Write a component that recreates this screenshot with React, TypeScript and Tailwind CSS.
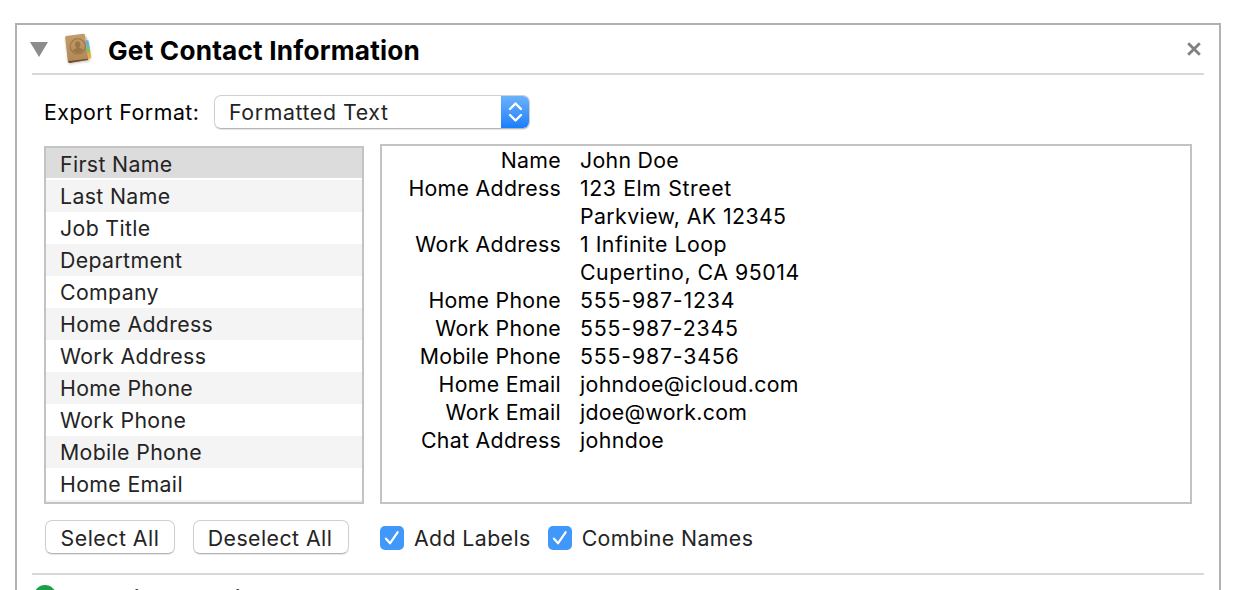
const fields = ["First Name", "Last Name", "Job Title", "Department", "Company", "Home Address", "Work Address", "Home Phone", "Work Phone", "Mobile Phone", "Home Email"];

const preview: [string, string, string][] = [
  ["Name", "John Doe", "tracking-[0.3px]"],
  ["Home Address", "123 Elm Street", "tracking-[0.6px]"],
  ["", "Parkview, AK 12345", "tracking-[0.4px]"],
  ["Work Address", "1 Infinite Loop", "tracking-[0.5px]"],
  ["", "Cupertino, CA 95014", "tracking-[0.55px]"],
  ["Home Phone", "555-987-1234", "tracking-[0.82px]"],
  ["Work Phone", "555-987-2345", "tracking-[0.82px]"],
  ["Mobile Phone", "555-987-3456", "tracking-[0.82px]"],
  ["Home Email", "johndoe@icloud.com", "tracking-[0.35px]"],
  ["Work Email", "jdoe@work.com", "tracking-[0.28px]"],
  ["Chat Address", "johndoe", "tracking-[0.4px]"],
];

function ContactsIcon() {
  return (
    <svg width="32" height="34" viewBox="0 0 32 34" className="shrink-0 overflow-visible drop-shadow-[0_1px_1px_rgba(0,0,0,0.2)]">
      <defs>
        <linearGradient id="cover" x1="0" y1="0" x2="0" y2="1">
          <stop offset="0" stopColor="#c39c68" />
          <stop offset="1" stopColor="#b08858" />
        </linearGradient>
      </defs>
      <path d="M5 31 26.5 28.2 27 26.5 24 5 21 4Z" fill="#d8d4cc" />
      <path d="M22.5 8l3 .5 1 6.5-3 .5z" fill="#5cb6dc" />
      <path d="M23.5 15l3.2-.3.7 6-3 .6z" fill="#78c66c" />
      <path d="M24.2 21l3.4-.4.6 5-3.3 1.6z" fill="#f2a83b" />
      <path d="M2.2 5.5Q2 4.2 3.2 4L20.3 1.8q1.4-.1 1.6 1.2l3.3 23.8q.1 1.2-1 1.6L6.3 30.5Q5 30.5 4.8 29Z" fill="url(#cover)" />
      <path d="M4.9 29.2 25 26.7v1.1L7 31q-1.6 0-2.1-1.8Z" fill="#6f4d2c" />
      <circle cx="14.8" cy="14.4" r="7.6" fill="none" stroke="#9a7546" strokeWidth="1.1" />
      <ellipse cx="14.7" cy="12.6" rx="2.6" ry="3.3" fill="#9a7546" />
      <path d="M9.5 18.8q1-1.6 4-2.5v-2h2.7v1.6q3 .5 4 1.5-1.6 3.3-5 3.5-3.4.2-5.7-2.1Z" fill="#9a7546" />
    </svg>
  );
}

function Checkbox({ label, spacing }: { label: string; spacing: string }) {
  return (
    <div className="flex h-6 items-center gap-[10px]">
      <svg width="24" height="24" viewBox="0 0 24 24">
        <rect width="24" height="24" rx="5" fill="#3f98fa" />
        <path d="M6 13.2l4 4.6L17.6 7" fill="none" stroke="#2879d4" strokeOpacity=".5" strokeWidth="2.4" strokeLinecap="round" strokeLinejoin="round" />
        <path d="M6 12.7l4 4.6L17.6 6.3" fill="none" stroke="#fff" strokeWidth="2.3" strokeLinecap="round" strokeLinejoin="round" />
      </svg>
      <span className={`leading-6 ${spacing}`}>{label}</span>
    </div>
  );
}

export default function App() {
  return (
    <div className="h-[590px] w-[1236px] overflow-hidden bg-white pt-[23px] pl-[15px] font-['Inter','Liberation_Sans',sans-serif] text-[21.3px] tracking-[0.35px] text-[#242424]">
      <section className="flex h-[600px] w-[1206px] flex-col border-2 border-[#b1b1b1] px-[15px]">
        <header className="flex h-[50px] shrink-0 items-center border-b-2 border-[#d8d8d8]">
          <svg width="18" height="15" viewBox="0 0 18 15" className="-ml-[2px] w-[18px] shrink-0">
            <path d="M0 0h18L9 15z" fill="#8c8c8c" />
          </svg>
          <div className="ml-[15px]"><ContactsIcon /></div>
          <h1 className="ml-[13px] pt-[3px] text-[26.2px] font-bold tracking-[0.2px] text-black">Get Contact Information</h1>
          <svg width="14" height="14" viewBox="0 0 14 14" className="mr-[3px] ml-auto">
            <path d="M1.2 1.2l11.6 11.6M12.8 1.2L1.2 12.8" stroke="#808080" strokeWidth="2.8" />
          </svg>
        </header>

        <div className="mt-5 ml-3 flex h-[34px] shrink-0 items-center">
          <span className="w-[170px] pt-0.5 tracking-[0.53px] text-black">Export Format:</span>
          <div className="flex h-[34px] w-[316px] items-center justify-between overflow-hidden rounded-[7px] border border-[#cfcfcf] border-b-[#b5b5b5] pl-[14px] shadow-[0_1px_1px_rgba(0,0,0,0.1)]">
            <span className="pt-0.5 tracking-[0.6px]">Formatted Text</span>
            <span className="-my-px -mr-px flex h-[34px] w-[29px] shrink-0 items-center justify-center bg-linear-to-b from-[#6cb3fa] to-[#147cfd]">
              <svg width="15" height="22" viewBox="0 0 15 22">
                <path d="M2 8l5.5-5.5L13 8M2 14l5.5 5.5L13 14" fill="none" stroke="#fff" strokeWidth="2.4" strokeLinecap="round" strokeLinejoin="round" />
              </svg>
            </span>
          </div>
        </div>

        <div className="mt-[15px] ml-3 flex shrink-0 items-end gap-4">
          <ul className="h-[358px] w-[320px] overflow-hidden border-2 border-[#c3c3c3]">
            {fields.map((name, i) => (
              <li key={name} className={`flex items-center pt-0.5 pl-[14px] ${i === 0 ? "h-8 border-b-2 border-white bg-[#dcdcdc] pt-1" : i % 2 ? "h-8 bg-[#f4f4f5]" : "h-8"}`}>
                {name}
              </li>
            ))}
            <li className="h-2 bg-[#f4f4f5]" />
          </ul>
          <div className="h-[360px] w-[812px] border-2 border-[#c3c3c3] text-black">
            {preview.map(([label, value, spacing]) => (
              <div key={value} className="grid h-7 grid-cols-[179px_1fr] items-start gap-[19px] leading-7">
                <span className="text-right tracking-[0.3px]">{label}</span>
                <span className={spacing}>{value}</span>
              </div>
            ))}
          </div>
        </div>

        <div className="mt-4 ml-[13px] flex h-[35px] shrink-0 items-start">
          <button className="h-[34px] w-[130px] rounded-[7px] border border-[#d0d0d0] border-b-[#b5b5b5] pt-0.5 leading-[30px] tracking-[0.5px] shadow-[0_1px_1px_rgba(0,0,0,0.1)]">Select All</button>
          <button className="ml-[18px] h-[34px] w-[156px] rounded-[7px] border border-[#d0d0d0] border-b-[#b5b5b5] pt-0.5 pr-0.5 leading-[30px] tracking-[0.45px] shadow-[0_1px_1px_rgba(0,0,0,0.1)]">Deselect All</button>
          <div className="mt-[6px] ml-[31px] flex gap-[17px]">
            <Checkbox label="Add Labels" spacing="tracking-[0.4px]" />
            <Checkbox label="Combine Names" spacing="tracking-[0.4px]" />
          </div>
        </div>

        <footer className="mt-[18px] flex h-[60px] shrink-0 items-start border-t-2 border-[#d8d8d8] pt-[10px] pl-[2px]">
          <span className="size-[22px] rounded-full bg-[#1c9f45]" />
          <span className="-mt-px ml-[21px] text-[25.6px] leading-[32px] font-bold tracking-[-0.05px] text-black">Previous Script</span>
        </footer>
      </section>
    </div>
  );
}
